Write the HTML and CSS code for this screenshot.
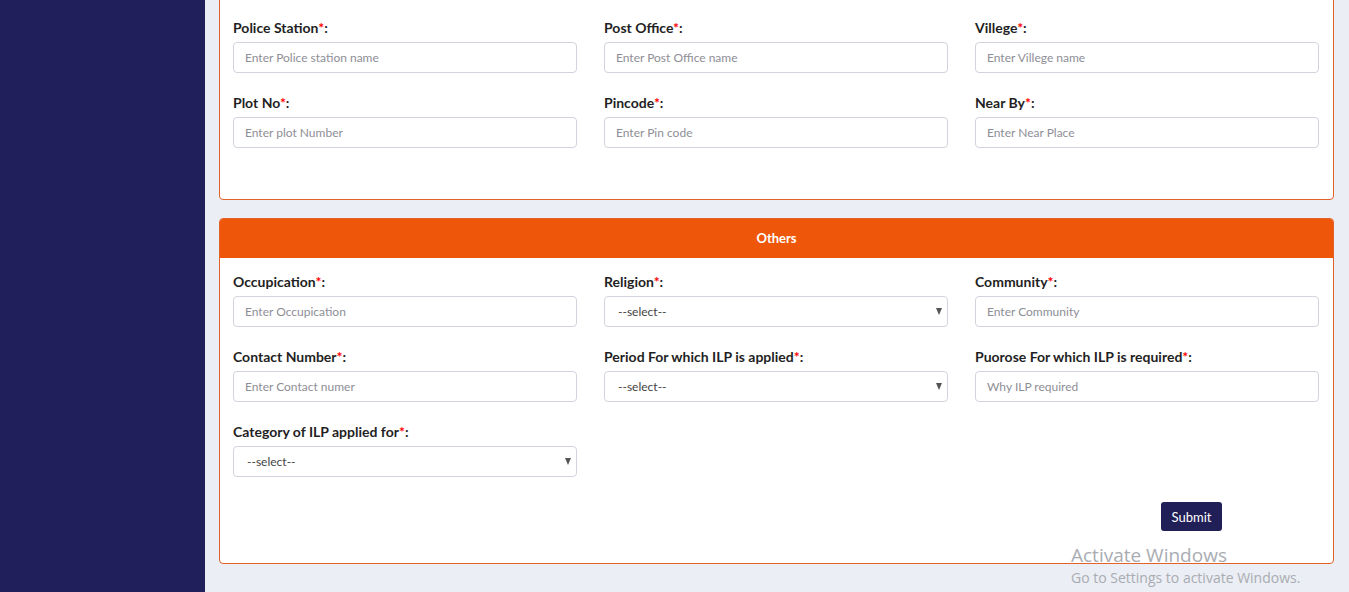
FILE: index.html
```html
<!DOCTYPE html>
<html lang="en">
<head>
<meta charset="utf-8">
<title>ILP Application</title>
<link rel="stylesheet" href="styles.css">
</head>
<body>
<div class="layout">
  <aside class="sidebar"></aside>
  <main class="main">
    <section class="card card-top">
      <div class="card-body">
        <div class="form-grid">
          <div class="field">
            <label class="lbl">Police Station<span class="req">*</span>:</label>
            <input class="ctrl" type="text" placeholder="Enter Police station name">
          </div>
          <div class="field">
            <label class="lbl">Post Office<span class="req">*</span>:</label>
            <input class="ctrl" type="text" placeholder="Enter Post Office name">
          </div>
          <div class="field">
            <label class="lbl">Villege<span class="req">*</span>:</label>
            <input class="ctrl" type="text" placeholder="Enter Villege name">
          </div>
          <div class="field">
            <label class="lbl">Plot No<span class="req">*</span>:</label>
            <input class="ctrl" type="text" placeholder="Enter plot Number">
          </div>
          <div class="field">
            <label class="lbl">Pincode<span class="req">*</span>:</label>
            <input class="ctrl" type="text" placeholder="Enter Pin code">
          </div>
          <div class="field">
            <label class="lbl">Near By<span class="req">*</span>:</label>
            <input class="ctrl" type="text" placeholder="Enter Near Place">
          </div>
        </div>
      </div>
    </section>

    <section class="card card-others">
      <header class="card-head">Others</header>
      <div class="card-body body-others">
        <div class="form-grid">
          <div class="field">
            <label class="lbl">Occupication<span class="req">*</span>:</label>
            <input class="ctrl" type="text" placeholder="Enter Occupication">
          </div>
          <div class="field">
            <label class="lbl">Religion<span class="req">*</span>:</label>
            <div class="sel-wrap">
              <select class="ctrl sel"><option>--select--</option></select>
            </div>
          </div>
          <div class="field">
            <label class="lbl">Community<span class="req">*</span>:</label>
            <input class="ctrl" type="text" placeholder="Enter Community">
          </div>
          <div class="field">
            <label class="lbl">Contact Number<span class="req">*</span>:</label>
            <input class="ctrl" type="text" placeholder="Enter Contact numer">
          </div>
          <div class="field">
            <label class="lbl">Period For which ILP is applied<span class="req">*</span>:</label>
            <div class="sel-wrap">
              <select class="ctrl sel"><option>--select--</option></select>
            </div>
          </div>
          <div class="field">
            <label class="lbl">Puorose For which ILP is required<span class="req">*</span>:</label>
            <input class="ctrl" type="text" placeholder="Why ILP required">
          </div>
          <div class="field">
            <label class="lbl">Category of ILP applied for<span class="req">*</span>:</label>
            <div class="sel-wrap">
              <select class="ctrl sel"><option>--select--</option></select>
            </div>
          </div>
        </div>
        <div class="actions">
          <button class="btn-submit" type="button">Submit</button>
        </div>
      </div>
    </section>
  </main>
</div>
<div class="watermark">
  <div class="wm-title">Activate Windows</div>
  <div class="wm-sub">Go to Settings to activate Windows.</div>
</div>
</body>
</html>
```

FILE: styles.css
```css
* { box-sizing: border-box; }
html, body { margin: 0; padding: 0; }
body {
  background: #ebeef4;
  font-family: Lato, "Open Sans", "Liberation Sans", sans-serif;
  color: #222;
  height: 592px;
  overflow: hidden;
}
.layout {
  display: flex;
  min-height: 592px;
}
.sidebar {
  width: 205px;
  flex: 0 0 205px;
  background: #211f5b;
}
.main {
  flex: 1;
  padding: 0 15px 0 14px;
}
.card {
  background: #fff;
  border: 1px solid #e3622a;
  border-radius: 4px;
  overflow: hidden;
}
.card-top {
  margin-top: -10px;
}
.card-body {
  padding: 14px 14px 31px 13px;
}
.card-top .card-body { padding-top: 27px; }
.form-grid {
  display: grid;
  grid-template-columns: repeat(3, 1fr);
  column-gap: 27px;
}
.field {
  display: flex;
  flex-direction: column;
  margin-bottom: 20px;
}
.lbl {
  font-size: 14px;
  font-weight: 700;
  line-height: 20px;
  margin-bottom: 4px;
  color: #1f1f24;
}
.req { color: #ff0000; }
.ctrl {
  height: 31px;
  width: 100%;
  border: 1px solid #d2d4dd;
  border-radius: 4px;
  padding: 0 11px;
  font-family: inherit;
  font-size: 12px;
  color: #444;
  background: #fff;
  outline: none;
}
.ctrl::placeholder { color: #8e8e96; }
.sel-wrap { position: relative; }
.sel {
  appearance: none;
  -webkit-appearance: none;
  padding-left: 13px;
  color: #444;
}
.sel-wrap::after {
  content: "";
  position: absolute;
  right: 6px;
  top: 12px;
  border-left: 3.5px solid transparent;
  border-right: 3.5px solid transparent;
  border-top: 7px solid #555;
  pointer-events: none;
}
.card-others { margin-top: 18px; }
.card-head {
  background: #ee5709;
  color: #fff;
  height: 39px;
  line-height: 39px;
  text-align: center;
  font-size: 13px;
  font-weight: 700;
}
.body-others { padding-bottom: 32px; }
.actions {
  display: flex;
  justify-content: flex-end;
  padding-right: 97px;
  margin-top: 5px;
}
.btn-submit {
  background: #201f57;
  color: #fff;
  border: none;
  border-radius: 3px;
  height: 29px;
  width: 61px;
  font-family: inherit;
  font-size: 13px;
  padding: 0;
}
.watermark {
  position: absolute;
  left: 1071px;
  top: 542px;
  color: #a9acb2;
  font-family: "Open Sans", "Noto Sans", sans-serif;
  pointer-events: none;
}
.wm-title { font-size: 19px; line-height: 26px; font-weight: 400; }
.wm-sub { font-size: 14px; line-height: 20px; }
```
